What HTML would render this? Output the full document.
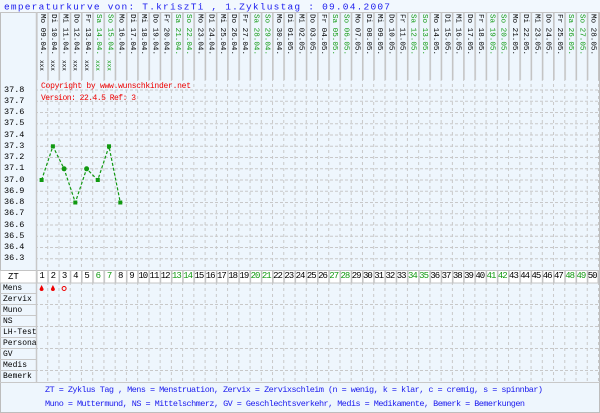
<!DOCTYPE html>
<html><head><meta charset="utf-8"><style>
body{margin:0;width:600px;height:413px;overflow:hidden;background:#eef6fd;font-family:"Liberation Mono",monospace;position:relative}
svg{position:absolute;left:0;top:0}
.cols{position:absolute;left:36px;top:0;width:562px;height:290px;display:flex}
.cols div{width:11.24px;flex:none;position:relative}
.cols .d{position:absolute;top:14px;left:2px;writing-mode:vertical-rl;font-size:7.6px;line-height:8px;color:#000}
.cols .s{position:absolute;top:60px;left:2px;writing-mode:vertical-rl;font-size:6px;line-height:7px;color:#000}
.cols .z{position:absolute;top:271px;left:0;width:11.24px;text-align:center;font-size:9px;line-height:11px;color:#000;letter-spacing:-1px}
.cols .g .d,.cols .g .z,.cols .g .s{color:#119911}
.lab{position:absolute;left:3px;font-size:8px;color:#000}
.ax{position:absolute;left:4px;font-size:8.5px;color:#000}
</style></head><body>
<svg width="600" height="413">
<defs>
<pattern id="vs" patternUnits="userSpaceOnUse" x="36" y="0" width="11.24" height="10"><rect x="0" y="0" width="1.6" height="10" fill="#c4c4c4"/></pattern>
<pattern id="vd" patternUnits="userSpaceOnUse" x="36" y="0" width="11.24" height="6"><rect x="0" y="0" width="1" height="3" fill="#c8c8c8"/></pattern>
<pattern id="hd" patternUnits="userSpaceOnUse" x="0" y="89.5" width="5" height="11.25"><rect x="0" y="0" width="3" height="1" fill="#c8c8c8"/></pattern>
<pattern id="hd2" patternUnits="userSpaceOnUse" x="0" y="0" width="5" height="2"><rect x="0" y="0" width="3" height="1" fill="#c8c8c8"/></pattern>
</defs>
<rect x="0.5" y="0.5" width="599" height="412" fill="#eef6fd" stroke="#bdbdbd"/>
<rect x="0" y="0" width="600" height="12" fill="#f2f8fe"/>
<line x1="0" y1="12.5" x2="600" y2="12.5" stroke="#c4c4c4"/>
<rect x="36" y="13" width="563" height="67" fill="url(#vs)"/>
<rect x="36" y="80" width="563" height="302" fill="url(#vd)"/>
<rect x="36" y="89" width="562" height="171" fill="url(#hd)"/>
<rect x="0" y="270.5" width="598" height="12.5" fill="#fff" stroke="#c4c4c4"/>
<rect x="36" y="271" width="563" height="12" fill="url(#vs)"/>
<g stroke="#c8c8c8">
<line x1="0" y1="293.5" x2="36" y2="293.5"/><line x1="0" y1="304.5" x2="36" y2="304.5"/>
<line x1="0" y1="315.5" x2="36" y2="315.5"/><line x1="0" y1="326.5" x2="36" y2="326.5"/>
<line x1="0" y1="337.5" x2="36" y2="337.5"/><line x1="0" y1="348.5" x2="36" y2="348.5"/>
<line x1="0" y1="359.5" x2="36" y2="359.5"/><line x1="0" y1="370.5" x2="36" y2="370.5"/>
<line x1="0" y1="382.5" x2="600" y2="382.5"/>
<line x1="36.5" y1="12" x2="36.5" y2="382" stroke-width="1.5"/>
</g>
<g>
<rect x="36" y="293" width="562" height="1" fill="url(#hd2)"/><rect x="36" y="304" width="562" height="1" fill="url(#hd2)"/>
<rect x="36" y="315" width="562" height="1" fill="url(#hd2)"/><rect x="36" y="326" width="562" height="1" fill="url(#hd2)"/>
<rect x="36" y="337" width="562" height="1" fill="url(#hd2)"/><rect x="36" y="348" width="562" height="1" fill="url(#hd2)"/>
<rect x="36" y="359" width="562" height="1" fill="url(#hd2)"/><rect x="36" y="370" width="562" height="1" fill="url(#hd2)"/>
</g>
<polyline points="41.6,180 52.9,146.3 64.1,168.8 75.3,202.5 86.6,168.8 97.8,180 109,146.3 120.3,202.5" fill="none" stroke="#119911" stroke-width="1.2" stroke-dasharray="3,2"/>
<g fill="#119911">
<rect x="39.6" y="178" width="4" height="4"/><rect x="50.9" y="144.3" width="4" height="4"/>
<circle cx="64.1" cy="168.8" r="2.5"/><rect x="73.3" y="200.5" width="4" height="4"/>
<circle cx="86.6" cy="168.8" r="2.5"/><rect x="95.8" y="178" width="4" height="4"/>
<rect x="107" y="144.3" width="4" height="4"/><rect x="118.3" y="200.5" width="4" height="4"/>
</g>
<path d="M41.6,285 L43.6,289 A2,2 0 1 1 39.6,289 Z" fill="#e00"/>
<path d="M52.9,285 L54.9,289 A2,2 0 1 1 50.9,289 Z" fill="#e00"/>
<circle cx="64.1" cy="288.5" r="2" fill="none" stroke="#e00" stroke-width="1"/>
<text x="41" y="88" font-size="8" fill="#e00" font-family="Liberation Mono, monospace" textLength="150">Copyright by www.wunschkinder.net</text>
<text x="41" y="100" font-size="8" fill="#e00" font-family="Liberation Mono, monospace" textLength="95">Version: 22.4.5 Ref: 3</text>
<text x="45" y="392" font-size="8.5" fill="#1a1aee" font-family="Liberation Mono, monospace" textLength="498">ZT = Zyklus Tag , Mens = Menstruation, Zervix = Zervixschleim (n = wenig, k = klar, c = cremig, s = spinnbar)</text>
<text x="45" y="406" font-size="8.5" fill="#1a1aee" font-family="Liberation Mono, monospace" textLength="480">Muno = Muttermund, NS = Mittelschmerz, GV = Geschlechtsverkehr, Medis = Medikamente, Bemerk = Bemerkungen</text>
<text x="4" y="9.5" font-size="9.5" fill="#1a1aee" font-family="Liberation Mono, monospace" textLength="386">emperaturkurve von: T.kriszTi , 1.Zyklustag : 09.04.2007</text>
</svg>
<div class="ax" style="top:85px">37.8</div><div class="ax" style="top:96px">37.7</div><div class="ax" style="top:107px">37.6</div><div class="ax" style="top:118px">37.5</div><div class="ax" style="top:130px">37.4</div><div class="ax" style="top:141px">37.3</div><div class="ax" style="top:152px">37.2</div><div class="ax" style="top:163px">37.1</div><div class="ax" style="top:175px">37.0</div><div class="ax" style="top:186px">36.9</div><div class="ax" style="top:197px">36.8</div><div class="ax" style="top:208px">36.7</div><div class="ax" style="top:220px">36.6</div><div class="ax" style="top:231px">36.5</div><div class="ax" style="top:242px">36.4</div><div class="ax" style="top:253px">36.3</div>
<div class="lab" style="top:272px;left:8px;font-size:9px">ZT</div>
<div class="lab" style="top:284px">Mens</div><div class="lab" style="top:295px">Zervix</div><div class="lab" style="top:306px">Muno</div><div class="lab" style="top:317px">NS</div><div class="lab" style="top:328px">LH-Test</div><div class="lab" style="top:339px">Persona</div><div class="lab" style="top:350px">GV</div><div class="lab" style="top:361px">Medis</div><div class="lab" style="top:372px">Bemerk</div>
<div class="cols">
<div><span class="d">Mo 09.04.</span><span class="s">xxx</span><span class="z">1</span></div>
<div><span class="d">Di 10.04.</span><span class="s">xxx</span><span class="z">2</span></div>
<div><span class="d">Mi 11.04.</span><span class="s">xxx</span><span class="z">3</span></div>
<div><span class="d">Do 12.04.</span><span class="s">xxx</span><span class="z">4</span></div>
<div><span class="d">Fr 13.04.</span><span class="s">xxx</span><span class="z">5</span></div>
<div class="g"><span class="d">Sa 14.04.</span><span class="s">xxx</span><span class="z">6</span></div>
<div class="g"><span class="d">So 15.04.</span><span class="s">xxx</span><span class="z">7</span></div>
<div><span class="d">Mo 16.04.</span><span class="z">8</span></div>
<div><span class="d">Di 17.04.</span><span class="z">9</span></div>
<div><span class="d">Mi 18.04.</span><span class="z">10</span></div>
<div><span class="d">Do 19.04.</span><span class="z">11</span></div>
<div><span class="d">Fr 20.04.</span><span class="z">12</span></div>
<div class="g"><span class="d">Sa 21.04.</span><span class="z">13</span></div>
<div class="g"><span class="d">So 22.04.</span><span class="z">14</span></div>
<div><span class="d">Mo 23.04.</span><span class="z">15</span></div>
<div><span class="d">Di 24.04.</span><span class="z">16</span></div>
<div><span class="d">Mi 25.04.</span><span class="z">17</span></div>
<div><span class="d">Do 26.04.</span><span class="z">18</span></div>
<div><span class="d">Fr 27.04.</span><span class="z">19</span></div>
<div class="g"><span class="d">Sa 28.04.</span><span class="z">20</span></div>
<div class="g"><span class="d">So 29.04.</span><span class="z">21</span></div>
<div><span class="d">Mo 30.04.</span><span class="z">22</span></div>
<div><span class="d">Di 01.05.</span><span class="z">23</span></div>
<div><span class="d">Mi 02.05.</span><span class="z">24</span></div>
<div><span class="d">Do 03.05.</span><span class="z">25</span></div>
<div><span class="d">Fr 04.05.</span><span class="z">26</span></div>
<div class="g"><span class="d">Sa 05.05.</span><span class="z">27</span></div>
<div class="g"><span class="d">So 06.05.</span><span class="z">28</span></div>
<div><span class="d">Mo 07.05.</span><span class="z">29</span></div>
<div><span class="d">Di 08.05.</span><span class="z">30</span></div>
<div><span class="d">Mi 09.05.</span><span class="z">31</span></div>
<div><span class="d">Do 10.05.</span><span class="z">32</span></div>
<div><span class="d">Fr 11.05.</span><span class="z">33</span></div>
<div class="g"><span class="d">Sa 12.05.</span><span class="z">34</span></div>
<div class="g"><span class="d">So 13.05.</span><span class="z">35</span></div>
<div><span class="d">Mo 14.05.</span><span class="z">36</span></div>
<div><span class="d">Di 15.05.</span><span class="z">37</span></div>
<div><span class="d">Mi 16.05.</span><span class="z">38</span></div>
<div><span class="d">Do 17.05.</span><span class="z">39</span></div>
<div><span class="d">Fr 18.05.</span><span class="z">40</span></div>
<div class="g"><span class="d">Sa 19.05.</span><span class="z">41</span></div>
<div class="g"><span class="d">So 20.05.</span><span class="z">42</span></div>
<div><span class="d">Mo 21.05.</span><span class="z">43</span></div>
<div><span class="d">Di 22.05.</span><span class="z">44</span></div>
<div><span class="d">Mi 23.05.</span><span class="z">45</span></div>
<div><span class="d">Do 24.05.</span><span class="z">46</span></div>
<div><span class="d">Fr 25.05.</span><span class="z">47</span></div>
<div class="g"><span class="d">Sa 26.05.</span><span class="z">48</span></div>
<div class="g"><span class="d">So 27.05.</span><span class="z">49</span></div>
<div><span class="d">Mo 28.05.</span><span class="z">50</span></div>
</div>
</body></html>
